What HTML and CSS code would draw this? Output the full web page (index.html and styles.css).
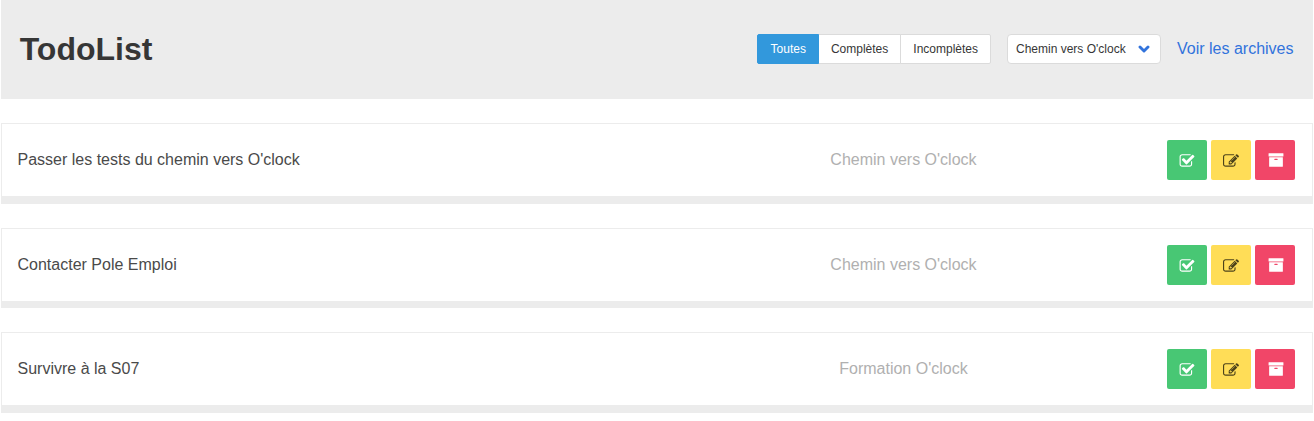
FILE: index.html
```html
<!DOCTYPE html>
<html lang="fr">
<head>
<meta charset="utf-8">
<title>TodoList</title>
<link rel="stylesheet" href="styles.css">
</head>
<body>
<svg class="sprite" aria-hidden="true">
  <symbol id="check" viewBox="0 0 1792 1792"><path d="M1472 930v318q0 119-84.5 203.5t-203.5 84.5h-832q-119 0-203.5-84.5t-84.5-203.5v-832q0-119 84.5-203.5t203.5-84.5h832q63 0 117 25 15 7 18 23 3 17-9 29l-49 49q-10 10-23 10-3 0-9-2-23-6-45-6h-832q-66 0-113 47t-47 113v832q0 66 47 113t113 47h832q66 0 113-47t47-113v-254q0-13 9-22l64-64q10-10 23-10 6 0 12 3 20 8 20 29zm231-489l-814 814q-24 24-57 24t-57-24l-430-430q-24-24-24-57t24-57l110-110q24-24 57-24t57 24l263 263 647-647q24-24 57-24t57 24l110 110q24 24 24 57t-24 57z"/></symbol>
  <symbol id="edit" viewBox="0 0 1792 1792"><path d="M888 1184l116-116-152-152-116 116v56h96v96h56zm440-720q-16-16-33 1l-350 350q-17 17-1 33t33-1l350-350q17-17 1-33zm80 594v190q0 119-84.5 203.5t-203.5 84.5h-832q-119 0-203.5-84.5t-84.5-203.5v-832q0-119 84.5-203.5t203.5-84.5h832q63 0 117 25 15 7 18 23 3 17-9 29l-49 49q-14 14-32 8-23-6-45-6h-832q-66 0-113 47t-47 113v832q0 66 47 113t113 47h832q66 0 113-47t47-113v-126q0-13 9-22l64-64q15-15 35-7t20 29zm-96-738l288 288-672 672h-288v-288zm444 132l-92 92-288-288 92-92q28-28 68-28t68 28l152 152q28 28 28 68t-28 68z"/></symbol>
  <symbol id="archive" viewBox="0 0 1792 1792"><path d="M1088 832q0-26-19-45t-45-19h-256q-26 0-45 19t-19 45 19 45 45 19h256q26 0 45-19t19-45zm576-192v960q0 26-19 45t-45 19h-1408q-26 0-45-19t-19-45v-960q0-26 19-45t45-19h1408q26 0 45 19t19 45zm64-448v256q0 26-19 45t-45 19h-1536q-26 0-45-19t-19-45v-256q0-26 19-45t45-19h1536q26 0 45 19t19 45z"/></symbol>
</svg>
<header class="header">
  <h1 class="title">TodoList</h1>
  <nav class="filters">
    <div class="buttons">
      <button class="button button--active">Toutes</button>
      <button class="button">Complètes</button>
      <button class="button">Incomplètes</button>
    </div>
    <button class="select">Chemin vers O'clock
      <svg class="chevron" viewBox="0 0 12 8"><path d="M2 2l4 4 4-4"/></svg>
    </button>
    <a class="link" href="#">Voir les archives</a>
  </nav>
</header>
<main class="tasks">
  <article class="task">
    <p class="task__name">Passer les tests du chemin vers O'clock</p>
    <p class="task__category">Chemin vers O'clock</p>
    <div class="task__actions">
      <button class="action action--check"><svg class="icon"><use href="#check"/></svg></button>
      <button class="action action--edit"><svg class="icon"><use href="#edit"/></svg></button>
      <button class="action action--archive"><svg class="icon"><use href="#archive"/></svg></button>
    </div>
  </article>
  <article class="task">
    <p class="task__name">Contacter Pole Emploi</p>
    <p class="task__category">Chemin vers O'clock</p>
    <div class="task__actions">
      <button class="action action--check"><svg class="icon"><use href="#check"/></svg></button>
      <button class="action action--edit"><svg class="icon"><use href="#edit"/></svg></button>
      <button class="action action--archive"><svg class="icon"><use href="#archive"/></svg></button>
    </div>
  </article>
  <article class="task">
    <p class="task__name">Survivre à la S07</p>
    <p class="task__category">Formation O'clock</p>
    <div class="task__actions">
      <button class="action action--check"><svg class="icon"><use href="#check"/></svg></button>
      <button class="action action--edit"><svg class="icon"><use href="#edit"/></svg></button>
      <button class="action action--archive"><svg class="icon"><use href="#archive"/></svg></button>
    </div>
  </article>
</main>
</body>
</html>
```
FILE: styles.css
```css
* {
  box-sizing: border-box;
  margin: 0;
  padding: 0;
}

body {
  margin: 0 1px;
  background: #fff;
  color: #4a4a4a;
  font: 16px/24px "Liberation Sans", Arial, sans-serif;
  overflow: hidden;
}

button {
  font-family: inherit;
}

.sprite {
  display: none;
}

.header {
  display: flex;
  align-items: center;
  justify-content: space-between;
  height: 99px;
  padding: 0 19.5px 1px 18.7px;
  background: #ececec;
}

.title {
  color: #363636;
  font-size: 32px;
  line-height: 36px;
}

.filters {
  display: flex;
  align-items: center;
  gap: 16px;
}

.buttons {
  display: flex;
}

.button {
  height: 30px;
  margin-left: -1px;
  padding: 0 12px;
  border: 1px solid #dbdbdb;
  background: #fff;
  color: #363636;
  font-size: 12px;
  line-height: 18px;
}

.button:first-child {
  margin-left: 0;
  padding-left: 12.5px;
  border-radius: 2px 0 0 2px;
}

.button:last-child {
  border-radius: 0 2px 2px 0;
}

.button--active {
  position: relative;
  border-color: #3298dc;
  background: #3298dc;
  color: #fff;
}

.select {
  display: flex;
  align-items: center;
  justify-content: space-between;
  width: 154px;
  height: 30px;
  padding: 0 10px 0 8px;
  border: 1px solid #dbdbdb;
  border-radius: 4px;
  background: #fff;
  color: #363636;
  font-size: 12px;
}

.chevron {
  width: 12px;
  height: 8px;
  fill: none;
  stroke: #3273dc;
  stroke-width: 2.9;
  stroke-linecap: round;
  stroke-linejoin: round;
}

.link {
  color: #3273dc;
  text-decoration: none;
}

.tasks {
  display: grid;
  grid-template-rows: 81px 80px 81px;
  gap: 24px;
  padding-top: 24px;
}

.task {
  display: grid;
  grid-template-columns: 641px 1fr 128px;
  align-items: center;
  padding: 0 17px 0 15.5px;
  border: 1px solid #ececec;
  border-bottom-width: 8px;
}

.task:nth-child(2) {
  border-bottom-width: 7px;
}

.task__category {
  padding-right: 18.6px;
  color: #b0b0b0;
  text-align: center;
}

.task__actions {
  display: flex;
  gap: 4px;
}

.action {
  display: flex;
  align-items: center;
  justify-content: center;
  width: 40px;
  height: 40px;
  padding-top: 1px;
  border: 0;
  border-radius: 2px;
}

.action--check {
  padding-right: 1px;
  background: #48c774;
  color: #fff;
}

.action--edit {
  background: #ffdd57;
  color: rgba(0, 0, 0, 0.7);
}

.action--archive {
  padding-top: 0;
  padding-left: 1px;
  background: #f14668;
  color: #fff;
}

.icon {
  width: 16px;
  height: 16px;
  fill: currentColor;
}
```
